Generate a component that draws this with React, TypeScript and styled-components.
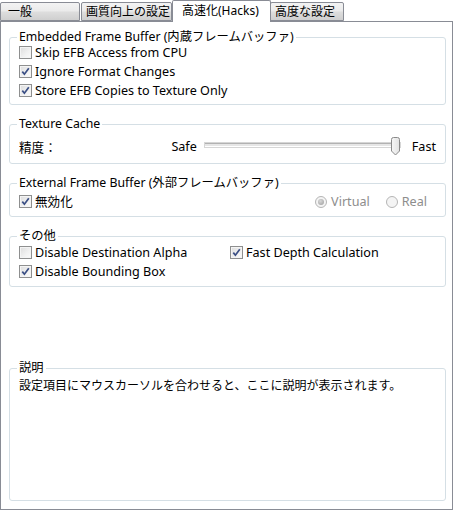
import React from 'react';
import styled, { createGlobalStyle } from 'styled-components';

const Global = createGlobalStyle`
  html, body { margin: 0; padding: 0; background: #ffffff; }
  body {
    font-family: "Noto Sans", "Noto Sans CJK JP", sans-serif;
    font-size: 12.6px;
    color: #000;
  }
  #root { width: 453px; height: 510px; }
`;

const Window = styled.div`
  width: 453px;
  height: 510px;
  display: flex;
  flex-direction: column;
  box-sizing: border-box;
`;

const TabStrip = styled.div`
  display: flex;
  align-items: flex-end;
  height: 21px;
  position: relative;
  z-index: 1;
  font-size: 12px;
`;

const Tab = styled.div<{ $w: number; $active?: boolean; $pad: number; $ml?: number }>`
  box-sizing: border-box;
  width: ${p => p.$w}px;
  height: ${p => (p.$active ? 22 : 19)}px;
  margin-bottom: ${p => (p.$active ? -1 : 0)}px;
  margin-left: ${p => p.$ml ?? 0}px;
  margin-right: 1px;
  padding-left: ${p => p.$pad}px;
  border: 1px solid #898c95;
  border-bottom: ${p => (p.$active ? 'none' : '1px solid #898c95')};
  border-radius: 2px 2px 0 0;
  background: ${p =>
    p.$active ? '#ffffff' : 'linear-gradient(to bottom, #f3f3f3 0%, #ebebeb 45%, #dddddd 55%, #cfcfcf 100%)'};
  display: flex;
  align-items: center;
  line-height: 14px;
  padding-bottom: ${p => (p.$active ? 2 : 0)}px;
  white-space: nowrap;
  &:last-child { margin-right: 0; }
`;

const Panel = styled.div`
  flex: 1;
  box-sizing: border-box;
  border: 1px solid #898c95;
  background: #ffffff;
  padding: 8px 6px 8px 8px;
  display: flex;
  flex-direction: column;
  gap: 12px;
`;

const Group = styled.fieldset<{ $pt: number; $pb: number; $grow?: boolean }>`
  margin: 0;
  border: 1px solid #d5dfe5;
  border-radius: 3px;
  padding: ${p => p.$pt}px 9px ${p => p.$pb}px 9px;
  min-width: 0;
  ${p => (p.$grow ? 'margin-top: auto; height: 140px; box-sizing: border-box;' : '')}
`;

const Legend = styled.legend`
  padding: 0 2px;
  margin-left: -2px;
  line-height: 14px;
  font-size: 12.3px;
  color: #000;
`;

const Rows = styled.div<{ $mt: number }>`
  margin-top: ${p => p.$mt}px;
`;

const Row = styled.div`
  height: 19px;
  line-height: 14px;
  display: flex;
  align-items: center;
`;

const Cols = styled.div`
  display: grid;
  grid-template-columns: 211px 1fr;
`;

const CheckLabel = styled.label`
  display: flex;
  align-items: center;
  gap: 3px;
  white-space: nowrap;
`;

const Box = styled.span`
  box-sizing: border-box;
  width: 13px;
  height: 13px;
  border: 1px solid #8e8f8f;
  background: linear-gradient(135deg, #dcdcdc 0%, #f1f1f1 60%, #fbfbfb 100%);
  box-shadow: inset 0 0 0 1px #f4f4f4;
  display: inline-flex;
  align-items: center;
  justify-content: center;
  flex: none;
`;

const Check = ({ checked, children }: { checked?: boolean; children: React.ReactNode }) => (
  <CheckLabel>
    <Box>
      {checked && (
        <svg width="9" height="9" viewBox="0 0 9 9">
          <path d="M1.3 4.6 L3.4 7.2 L7.8 1.2" fill="none" stroke="#3b4f85" strokeWidth="1.7" />
        </svg>
      )}
    </Box>
    <span>{children}</span>
  </CheckLabel>
);

const RadioLabel = styled.label`
  display: flex;
  align-items: center;
  gap: 4px;
  color: #8d8d8d;
  white-space: nowrap;
`;

const RadioCircle = styled.span`
  box-sizing: border-box;
  width: 12px;
  height: 12px;
  border-radius: 50%;
  border: 1px solid #b5b5b5;
  background: #f4f4f4;
  display: inline-flex;
  align-items: center;
  justify-content: center;
  flex: none;
`;

const RadioDot = styled.span`
  width: 6px;
  height: 6px;
  border-radius: 50%;
  background: radial-gradient(circle at 40% 35%, #d8d8d8, #9c9c9c);
`;

const Radio = ({ checked, children }: { checked?: boolean; children: React.ReactNode }) => (
  <RadioLabel>
    <RadioCircle>{checked && <RadioDot />}</RadioCircle>
    <span>{children}</span>
  </RadioLabel>
);

const Spacer = styled.div`
  flex: 1;
`;

const RadioGroup = styled.div`
  display: flex;
  align-items: center;
  gap: 16px;
  margin-right: 9px;
`;

const SliderRow = styled.div`
  height: 20px;
  margin-top: 5px;
  display: flex;
  align-items: center;
`;

const SliderBox = styled.div`
  position: relative;
  width: 199px;
  height: 20px;
  margin-left: 6px;
  margin-right: 10px;
`;

const Track = styled.div`
  position: absolute;
  left: 2px;
  right: 2px;
  top: 7px;
  height: 2px;
  border-top: 1px solid #b2b2b2;
  border-bottom: 1px solid #ffffff;
  background: #e6e6e6;
  box-shadow: 0 0 0 1px #d6d6d6;
`;

const Thumb = styled.svg`
  position: absolute;
  right: 1px;
  top: 1px;
`;

const DescText = styled.div`
  line-height: 19px;
  font-size: 12px;
  font-family: "Noto Sans CJK JP", sans-serif;
`;

export default function App() {
  return (
    <Window>
      <Global />
      <TabStrip>
        <Tab $w={80} $pad={7}>一般</Tab>
        <Tab $w={91} $pad={4}>画質向上の設定</Tab>
        <Tab $w={99} $pad={9} $active $ml={-1}>高速化(Hacks)</Tab>
        <Tab $w={74} $pad={4} $ml={-2}>高度な設定</Tab>
      </TabStrip>
      <Panel>
        <Group $pt={0} $pb={4}>
          <Legend>Embedded Frame Buffer (内蔵フレームバッファ)</Legend>
          <Rows $mt={-1}>
            <Row><Check>Skip EFB Access from CPU</Check></Row>
            <Row><Check checked>Ignore Format Changes</Check></Row>
            <Row><Check checked>Store EFB Copies to Texture Only</Check></Row>
          </Rows>
        </Group>
        <Group $pt={0} $pb={7}>
          <Legend>Texture Cache</Legend>
          <SliderRow>
            <span>精度：</span>
            <Spacer />
            <span>Safe</span>
            <SliderBox>
              <Track />
              <Thumb width="11" height="19" viewBox="0 0 11 19">
                <defs>
                  <linearGradient id="tg" x1="0" y1="0" x2="1" y2="0">
                    <stop offset="0" stopColor="#f7f7f7" />
                    <stop offset="1" stopColor="#e2e2e2" />
                  </linearGradient>
                </defs>
                <path d="M1.5 2.5 Q1.5 0.5 3.5 0.5 L7.5 0.5 Q9.5 0.5 9.5 2.5 L9.5 14 L5.5 18 L1.5 14 Z" fill="url(#tg)" stroke="#8a8a8a" strokeWidth="1" />
              </Thumb>
            </SliderBox>
            <span>Fast</span>
          </SliderRow>
        </Group>
        <Group $pt={2} $pb={5}>
          <Legend>External Frame Buffer (外部フレームバッファ)</Legend>
          <Row>
            <Check checked>無効化</Check>
            <Spacer />
            <RadioGroup>
              <Radio checked>Virtual</Radio>
              <Radio>Real</Radio>
            </RadioGroup>
          </Row>
        </Group>
        <Group $pt={0} $pb={5}>
          <Legend>その他</Legend>
          <Cols>
            <Row><Check>Disable Destination Alpha</Check></Row>
            <Row><Check checked>Fast Depth Calculation</Check></Row>
            <Row><Check checked>Disable Bounding Box</Check></Row>
          </Cols>
        </Group>
        <Group $pt={0} $pb={0} $grow>
          <Legend>説明</Legend>
          <DescText>設定項目にマウスカーソルを合わせると、ここに説明が表示されます。</DescText>
        </Group>
      </Panel>
    </Window>
  );
}
